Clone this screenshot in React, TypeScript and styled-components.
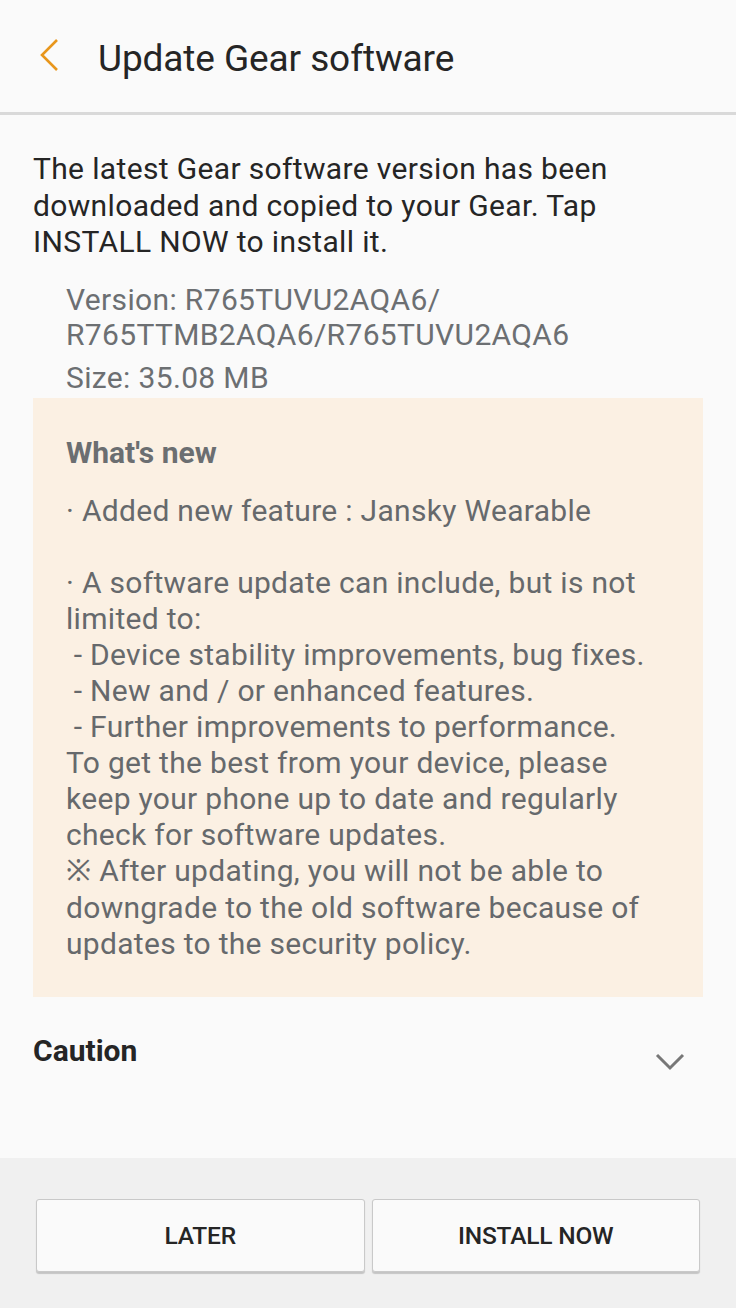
import React from "react";
import styled, { createGlobalStyle } from "styled-components";

const Global = createGlobalStyle`
  html, body { margin: 0; padding: 0; background: #fafafa; }
  body { font-family: Roboto, "Noto Sans", sans-serif; -webkit-font-smoothing: antialiased; }
  * { box-sizing: border-box; }
`;

const Screen = styled.div`
  width: 736px;
  height: 1308px;
  display: flex;
  flex-direction: column;
  background: #fafafa;
  overflow: hidden;
`;

const Header = styled.header`
  height: 115px;
  flex: none;
  display: flex;
  align-items: center;
  padding: 4px 0 0 36px;
  border-bottom: 3px solid #d9d9d9;
`;

const BackButton = styled.button`
  width: 26px;
  height: 36px;
  padding: 0;
  border: 0;
  background: none;
  display: flex;
  align-items: center;
  justify-content: center;
  margin-right: 36px;
  margin-top: -6px;
`;

const Title = styled.h1`
  margin: 0;
  font-size: 37px;
  font-weight: 400;
  color: #252525;
  letter-spacing: -0.1px;
`;

const Content = styled.main`
  flex: 1;
  padding: 36px 33px 0 33px;
`;

const Intro = styled.p`
  margin: 0;
  font-size: 30px;
  line-height: 36.5px;
  letter-spacing: 0.35px;
  color: #252525;
`;

const Meta = styled.div`
  margin: 21px 0 0 33px;
  color: #6c6f72;
  font-size: 30px;
  letter-spacing: 0.35px;
`;

const MetaLine = styled.div<{ $gap?: number }>`
  line-height: 35px;
  margin-top: ${(p) => p.$gap ?? 0}px;
`;

const Notes = styled.section`
  margin-top: 3px;
  background: #fbf0e3;
  padding: 37px 33px 35px 33px;
  color: #66696c;
  letter-spacing: 0.3px;
`;

const NotesTitle = styled.h2`
  margin: 0 0 22px 0;
  font-size: 30px;
  line-height: 36px;
  font-weight: 700;
  color: #6b6e71;
  letter-spacing: 0;
`;

const NotesBody = styled.div`
  font-size: 30px;
  line-height: 36.1px;
  white-space: pre-wrap;
`;

const CautionRow = styled.div`
  display: flex;
  align-items: center;
  justify-content: space-between;
  padding: 34px 18px 0 0;
`;

const CautionTitle = styled.h2`
  margin: 0;
  font-size: 30px;
  font-weight: 700;
  color: #252525;
`;

const Chevron = styled.span`
  display: flex;
  margin-top: 22px;
`;

const Footer = styled.footer`
  height: 150px;
  flex: none;
  background: #f0f0f0;
  display: grid;
  grid-template-columns: 1fr 1fr;
  gap: 7px;
  padding: 41px 36px 36px 36px;
`;

const ActionButton = styled.button`
  height: 73px;
  border: 1px solid #c9c9c9;
  border-radius: 3px;
  background: #fafafa;
  box-shadow: 0 1.5px 1px rgba(0, 0, 0, 0.18);
  font-family: Roboto, sans-serif;
  font-size: 24.5px;
  font-weight: 500;
  color: #252525;
  letter-spacing: -0.2px;
`;

const notes = `· Added new feature : Jansky Wearable

· A software update can include, but is not
limited to:
 - Device stability improvements, bug fixes.
 - New and / or enhanced features.
 - Further improvements to performance.
To get the best from your device, please
keep your phone up to date and regularly
check for software updates.
※ After updating, you will not be able to
downgrade to the old software because of
updates to the security policy.`;

export default function App() {
  return (
    <Screen>
      <Global />
      <Header>
        <BackButton aria-label="Back">
          <svg width="22" height="34" viewBox="0 0 22 34" fill="none">
            <path d="M19 2 L4 17 L19 32" stroke="#e8961c" strokeWidth="2.6" />
          </svg>
        </BackButton>
        <Title>Update Gear software</Title>
      </Header>
      <Content>
        <Intro>
          The latest Gear software version has been downloaded and copied to your Gear. Tap INSTALL NOW to install it.
        </Intro>
        <Meta>
          <MetaLine>Version: R765TUVU2AQA6/</MetaLine>
          <MetaLine>R765TTMB2AQA6/R765TUVU2AQA6</MetaLine>
          <MetaLine $gap={8}>Size: 35.08 MB</MetaLine>
        </Meta>
        <Notes>
          <NotesTitle>What's new</NotesTitle>
          <NotesBody>{notes}</NotesBody>
        </Notes>
        <CautionRow>
          <CautionTitle>Caution</CautionTitle>
          <Chevron>
            <svg width="30" height="18" viewBox="0 0 30 18" fill="none">
              <path d="M2 2 L15 15 L28 2" stroke="#777" strokeWidth="3" />
            </svg>
          </Chevron>
        </CautionRow>
      </Content>
      <Footer>
        <ActionButton>LATER</ActionButton>
        <ActionButton>INSTALL NOW</ActionButton>
      </Footer>
    </Screen>
  );
}
